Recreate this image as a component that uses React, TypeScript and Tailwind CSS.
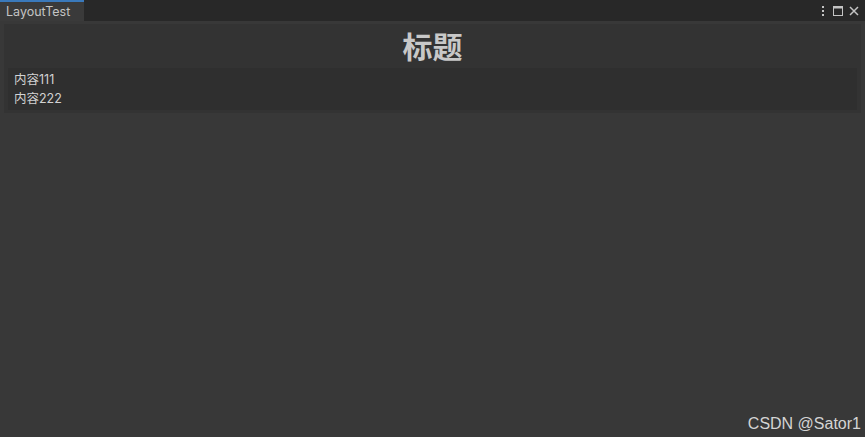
import React from "react";

export default function App() {
  return (
    <div
      className="w-[865px] h-[437px] bg-[#383838] flex flex-col relative overflow-hidden"
      style={{ fontFamily: 'Inter, "Noto Sans CJK SC", sans-serif' }}
    >
      {/* top bar */}
      <div className="h-[21px] bg-[#282828] flex items-stretch shrink-0">
        <div className="w-[84px] bg-[#3a3a3a] border-t-2 border-[#3a79bb] flex items-center pl-[6px] pt-[2px] text-[12.5px] text-[#c4c4c4] leading-none">
          LayoutTest
        </div>
        <div className="flex-1" />
        <div className="flex items-center pr-[6px] pt-[1px]">
          <svg width="6" height="12" viewBox="0 0 6 12" className="mr-[7px]">
            <rect x="2" y="1" width="2" height="2" fill="#c4c4c4" />
            <rect x="2" y="5" width="2" height="2" fill="#c4c4c4" />
            <rect x="2" y="9" width="2" height="2" fill="#c4c4c4" />
          </svg>
          <svg width="10" height="10" viewBox="0 0 10 10" className="mr-[6px]">
            <rect x="0.5" y="0.5" width="9" height="9" fill="none" stroke="#c4c4c4" />
            <rect x="0.5" y="0.5" width="9" height="2" fill="#c4c4c4" />
          </svg>
          <svg width="10" height="10" viewBox="0 0 10 10">
            <path d="M1 1 L9 9 M9 1 L1 9" stroke="#c4c4c4" strokeWidth="1.5" />
          </svg>
        </div>
      </div>

      {/* body */}
      <div className="pt-[3px] px-[4px]">
        <div className="bg-[#333333] px-[4px] pb-[3px]">
          <div className="h-[44px] flex items-center justify-center pt-[1px] text-[30px] font-bold text-[#c8c8c8] leading-none">
            标题
          </div>
          <div className="bg-[#2f2f2f] py-[2px] px-[6px] text-[12.5px] text-[#d2d2d2]">
            <div className="leading-[19px]">内容111</div>
            <div className="leading-[19px]">内容222</div>
          </div>
        </div>
      </div>

      <div
        className="absolute right-[4px] bottom-[5px] text-[16px] text-[#d4d4d4] leading-none"
        style={{ fontFamily: '"Liberation Sans", Arial, sans-serif' }}
      >
        CSDN @Sator1
      </div>
    </div>
  );
}
